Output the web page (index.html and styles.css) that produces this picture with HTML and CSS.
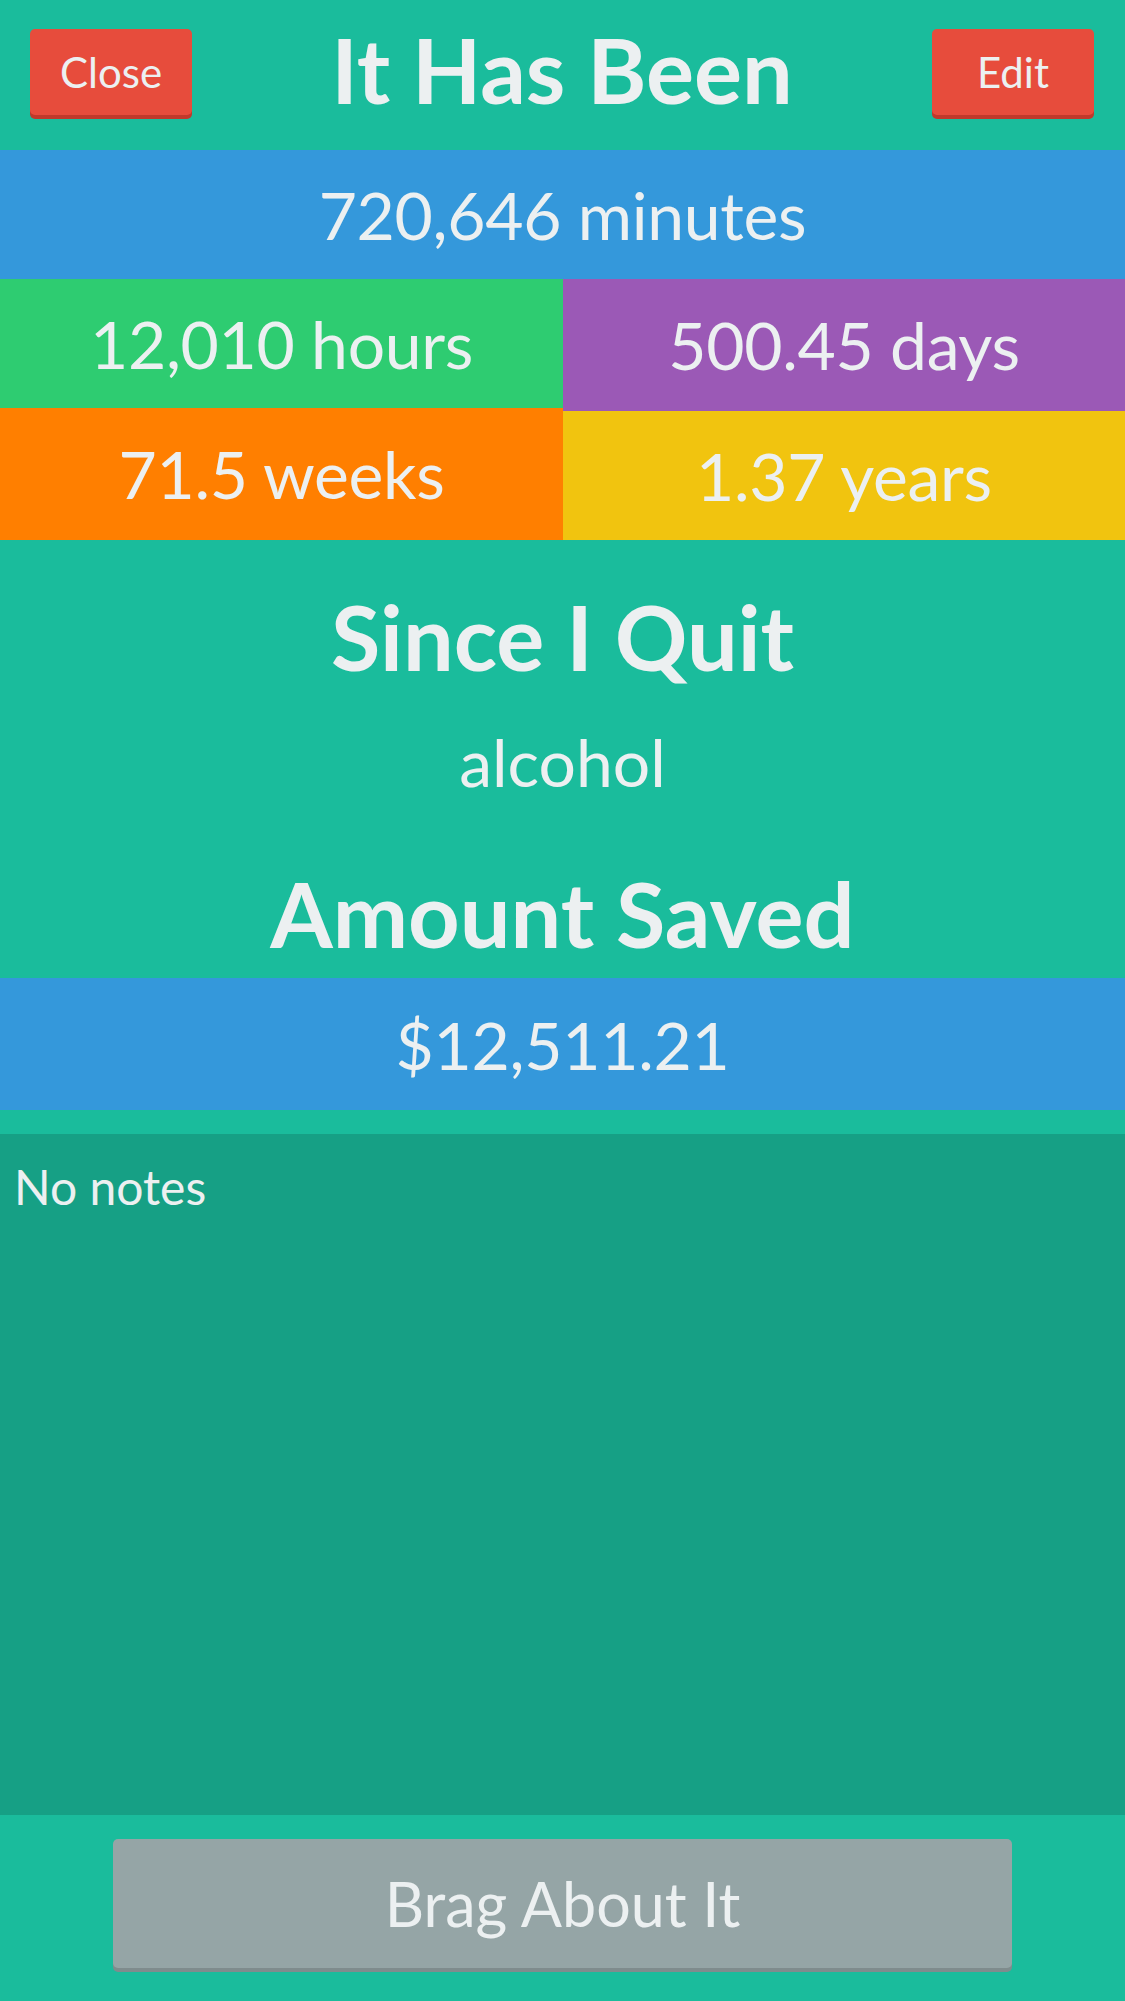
FILE: index.html
```html
<!DOCTYPE html>
<html lang="en">
<head>
<meta charset="utf-8">
<title>It Has Been</title>
<link rel="stylesheet" href="styles.css">
</head>
<body>
<div class="app">
  <header class="topbar">
    <button class="btn btn-red">Close</button>
    <h1 class="title">It Has Been</h1>
    <button class="btn btn-red">Edit</button>
  </header>

  <div class="stat stat-blue">720,646 minutes</div>
  <div class="grid">
    <div class="col">
      <div class="stat stat-green">12,010 hours</div>
      <div class="stat stat-orange stat-tall">71.5 weeks</div>
    </div>
    <div class="col">
      <div class="stat stat-purple stat-tall">500.45 days</div>
      <div class="stat stat-yellow">1.37 years</div>
    </div>
  </div>

  <section class="info">
    <h2 class="heading heading-first">Since I Quit</h2>
    <p class="habit">alcohol</p>
    <h2 class="heading heading-second">Amount Saved</h2>
  </section>

  <div class="stat stat-blue stat-tall">$12,511.21</div>

  <div class="notes">No notes</div>

  <footer class="footer">
    <button class="btn btn-grey">Brag About It</button>
  </footer>
</div>
</body>
</html>
```

FILE: styles.css
```css
* { box-sizing: border-box; }

html, body {
  margin: 0;
  padding: 0;
}

body {
  background: #1abc9c;
  font-family: Lato, "Open Sans", "Liberation Sans", sans-serif;
  font-weight: 400;
  color: #ecf0f1;
}

.app {
  display: flex;
  flex-direction: column;
  min-height: 2001px;
}

.topbar {
  height: 150px;
  display: flex;
  align-items: flex-start;
  justify-content: space-between;
  padding: 0 31px 0 30px;
}

.btn {
  font-family: inherit;
  font-weight: 400;
  color: #ecf0f1;
  border: none;
  border-radius: 5px;
  cursor: pointer;
  padding: 0;
}

.btn-red {
  margin-top: 29px;
  width: 162px;
  height: 86px;
  font-size: 42px;
  background: #e74c3c;
  box-shadow: 0 4px 0 #c0392b;
}

.title {
  margin: 15px 0 0;
  font-size: 90px;
  line-height: 1.2;
  font-weight: 700;
}

.stat {
  height: 129px;
  display: flex;
  align-items: center;
  justify-content: center;
  font-size: 66px;
  line-height: 1.2;
  letter-spacing: -0.3px;
}

.stat-tall { height: 132px; }

.stat-blue { background: #3498db; }
.stat-green { background: #2ecc71; }
.stat-purple { background: #9b59b6; }
.stat-orange { background: #ff7f00; }
.stat-yellow { background: #f1c40f; }

.grid {
  display: grid;
  grid-template-columns: 563px 1fr;
}

.col {
  display: flex;
  flex-direction: column;
}

.info {
  display: flex;
  flex-direction: column;
  align-items: center;
  padding: 42px 0 11px;
}

.heading {
  margin: 0;
  font-size: 90px;
  line-height: 1.2;
  font-weight: 700;
}

.heading-second { margin-top: 58px; }

.habit {
  margin: 32px 0 0;
  font-size: 66px;
  line-height: 1.2;
}

.notes {
  margin-top: 24px;
  height: 681px;
  background: #16a085;
  padding: 24px 14px;
  font-size: 48px;
  line-height: 1.2;
}

.footer {
  flex: 1;
  display: flex;
  justify-content: center;
  padding-top: 24px;
}

.btn-grey {
  width: 899px;
  height: 129px;
  font-size: 61px;
  background: #95a5a6;
  box-shadow: 0 4px 0 #7f8c8d;
}
```
